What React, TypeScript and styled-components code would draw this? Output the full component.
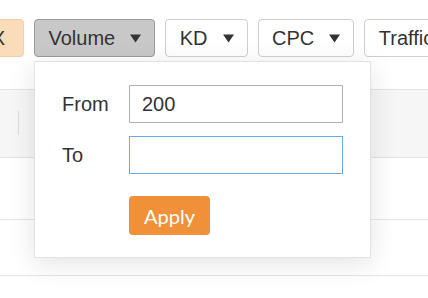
import React from "react";
import styled, { createGlobalStyle } from "styled-components";

const GlobalStyle = createGlobalStyle`
  html, body { margin: 0; padding: 0; background: #ffffff; }
  body { font-family: "Liberation Sans", Arial, sans-serif; color: #333; overflow: hidden; }
`;

const Page = styled.div`
  position: relative;
  width: 428px;
  height: 298px;
  overflow: hidden;
`;

const Toolbar = styled.div`
  display: flex;
  gap: 10px;
  padding-top: 19px;
  margin-left: -61px;
  white-space: nowrap;
`;

const Btn = styled.button<{ $variant?: "active" | "accent" }>`
  display: flex;
  align-items: center;
  flex: none;
  height: 38px;
  padding: 0 13px 0 13.5px;
  box-sizing: border-box;
  border-radius: 4px;
  font-family: "Liberation Sans", Arial, sans-serif;
  font-size: 20px;
  color: #333;
  cursor: pointer;
  border: 1px solid
    ${(p) => (p.$variant === "active" ? "#9a9a9a" : p.$variant === "accent" ? "#f3cfa6" : "#cfcfcf")};
  background: ${(p) => (p.$variant === "active" ? "#c8c8c8" : p.$variant === "accent" ? "#fbdcb8" : "#ffffff")};
`;

const AccentBtn = styled(Btn)`
  width: 85px;
  justify-content: flex-end;
  padding-right: 18px;
`;

const Caret = styled.svg`
  width: 11px;
  height: 9px;
  margin-left: 15px;
  flex: none;
`;

const Anchor = styled.div`
  position: relative;
  flex: none;
`;

const Table = styled.div`
  margin-top: 32px;
`;

const HeaderBand = styled.div`
  box-sizing: border-box;
  height: 69px;
  padding-top: 21px;
  background: #f6f6f6;
  border-top: 1px solid #e3e3e3;
  border-bottom: 1px solid #e3e3e3;
  display: flex;
  align-items: flex-start;
`;

const Divider = styled.div`
  width: 1px;
  height: 24px;
  margin-left: 18px;
  background: #dcdcdc;
`;

const Row = styled.div<{ $h: number }>`
  height: ${(p) => p.$h}px;
  border-bottom: 1px solid #e6e6e6;
`;

const Panel = styled.div`
  position: absolute;
  top: 42px;
  left: 0;
  z-index: 10;
  width: 337px;
  box-sizing: border-box;
  background: #fff;
  border: 1px solid #e2e2e2;
  box-shadow: 0 6px 26px rgba(0, 0, 0, 0.11);
  padding: 23px 27px 22px 27px;
  display: grid;
  grid-template-columns: 67px 214px;
  row-gap: 13px;
  align-items: center;
`;

const Label = styled.label`
  font-size: 20px;
  color: #333;
`;

const Input = styled.input<{ $focused?: boolean }>`
  box-sizing: border-box;
  width: 214px;
  height: 38px;
  padding: 0 12px;
  font-family: "Liberation Sans", Arial, sans-serif;
  font-size: 20px;
  color: #333;
  outline: none;
  border: 1px solid ${(p) => (p.$focused ? "#6aabe9" : "#b0b0b0")};
  background: #fff;
`;

const ApplyBtn = styled.button`
  grid-column: 2;
  justify-self: start;
  margin-top: 9px;
  width: 81px;
  height: 39px;
  padding: 0;
  border: none;
  border-radius: 4px;
  background: #f0913a;
  color: #fff;
  font-family: Lato, "Open Sans", sans-serif;
  font-size: 20px;
  cursor: pointer;
`;

const CaretIcon = () => (
  <Caret viewBox="0 0 11 9">
    <path d="M0 0.5 H11 L5.5 8.5 Z" fill="#333" />
  </Caret>
);

export default function App() {
  return (
    <>
      <GlobalStyle />
      <Page>
        <Toolbar>
          <AccentBtn $variant="accent">X</AccentBtn>
          <Anchor>
            <Btn $variant="active">
              Volume
              <CaretIcon />
            </Btn>
            <Panel>
              <Label>From</Label>
              <Input defaultValue="200" />
              <Label>To</Label>
              <Input $focused />
              <ApplyBtn>Apply</ApplyBtn>
            </Panel>
          </Anchor>
          <Btn>
            KD
            <CaretIcon />
          </Btn>
          <Btn>
            CPC
            <CaretIcon />
          </Btn>
          <Btn>
            Traffic
            <CaretIcon />
          </Btn>
        </Toolbar>
        <Table>
          <HeaderBand>
            <Divider />
          </HeaderBand>
          <Row $h={61} />
          <Row $h={55} />
        </Table>
      </Page>
    </>
  );
}
